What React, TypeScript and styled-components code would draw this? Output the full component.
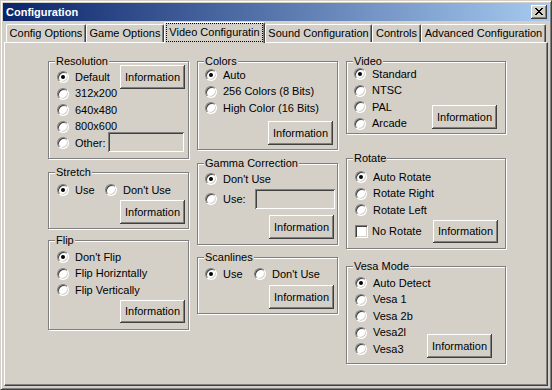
import React from "react";
import styled, { createGlobalStyle } from "styled-components";

const GlobalStyle = createGlobalStyle`
  html, body {
    margin: 0;
    padding: 0;
    background: #d4d0c8;
  }
  body {
    font-family: "Liberation Sans", Arial, sans-serif;
    font-size: 11px;
    color: #000;
  }
`;

const Window = styled.div`
  box-sizing: border-box;
  width: 552px;
  height: 390px;
  padding: 2px;
  background: #d4d0c8;
  border: 1px solid;
  border-color: #d4d0c8 #404040 #404040 #d4d0c8;
  box-shadow: inset 1px 1px #fff, inset -1px -1px #808080;
  display: flex;
  flex-direction: column;
`;

const TitleBar = styled.div`
  flex: none;
  height: 18px;
  padding: 0 2px 0 3px;
  display: flex;
  align-items: center;
  background: linear-gradient(to right, #0a246a, #a6caf0);
`;

const TitleText = styled.span`
  flex: 1;
  color: #fff;
  font-weight: bold;
  font-size: 11px;
  line-height: 13px;
`;

const CloseButton = styled.div`
  box-sizing: border-box;
  width: 16px;
  height: 14px;
  background: #d4d0c8;
  box-shadow: inset -1px -1px #404040, inset 1px 1px #fff, inset -2px -2px #808080;
  display: flex;
  align-items: center;
  justify-content: center;
  padding: 0 1px 1px 0;
`;

const Body = styled.div`
  flex: 1;
  display: flex;
  flex-direction: column;
  padding-top: 1px;
  margin: 0 1px 1px;
`;

const TabRow = styled.div`
  flex: none;
  height: 20px;
  padding-left: 2px;
  display: flex;
  align-items: flex-end;
`;

const Tab = styled.div<{ $w: number; $active?: boolean }>`
  box-sizing: border-box;
  width: ${(p) => p.$w}px;
  height: ${(p) => (p.$active ? 21 : 18)}px;
  margin-bottom: ${(p) => (p.$active ? -1 : 0)}px;
  position: relative;
  z-index: ${(p) => (p.$active ? 1 : 0)};
  background: #d4d0c8;
  border-top: 1px solid #fff;
  border-left: 1px solid #fff;
  border-right: 1px solid #404040;
  border-radius: 2px 2px 0 0;
  box-shadow: inset -1px 0 #808080;
  padding: 0 1px 1px;
  display: flex;
  align-items: center;
  justify-content: center;
  white-space: nowrap;
  line-height: 13px;
`;

const FocusRing = styled.span`
  align-self: stretch;
  flex: 1;
  border: 1px dotted #000;
  display: flex;
  align-items: center;
  justify-content: center;
`;

const Panel = styled.div`
  flex: 1;
  box-sizing: border-box;
  border: 1px solid;
  border-color: #fff #404040 #404040 #fff;
  box-shadow: inset -1px -1px #808080;
  padding: 12px 0 0 43px;
  display: grid;
  grid-template-columns: 141px 141px 160px;
  column-gap: 8px;
  align-items: start;
`;

const Column = styled.div`
  display: flex;
  flex-direction: column;
`;

const Frame = styled.fieldset<{ $h: number; $mt?: number }>`
  box-sizing: border-box;
  height: ${(p) => p.$h}px;
  margin: ${(p) => p.$mt ?? 0}px 0 0;
  padding: 0;
  min-width: 0;
  border: 1px solid #808080;
  box-shadow: inset 1px 1px #fff, 1px 1px #fff;
`;

const Caption = styled.legend`
  margin-left: 6px;
  padding: 0 1px;
  font-size: 11px;
  line-height: 13px;
  background: #d4d0c8;
`;

const Content = styled.div<{ $off: number; $pl: number; $pr: number; $row?: boolean }>`
  display: flex;
  flex-direction: ${(p) => (p.$row ? "row" : "column")};
  margin-top: ${(p) => p.$off}px;
  padding: 0 ${(p) => p.$pr}px 0 ${(p) => p.$pl}px;
`;

const List = styled.div`
  flex: 1;
  min-width: 0;
  display: flex;
  flex-direction: column;
`;

const Aside = styled.div<{ $mt: number; $h?: number }>`
  flex: none;
  display: flex;
  flex-direction: column;
  align-items: flex-end;
  justify-content: space-between;
  margin-top: ${(p) => p.$mt}px;
  height: ${(p) => (p.$h ? `${p.$h}px` : "auto")};
`;

const Row = styled.div<{ $h?: number; $mt?: number }>`
  display: flex;
  align-items: center;
  height: ${(p) => p.$h ?? 16.5}px;
  margin-top: ${(p) => p.$mt ?? 0}px;
`;

const ButtonLine = styled.div<{ $mt: number; $mr?: number }>`
  display: flex;
  justify-content: flex-end;
  margin-top: ${(p) => p.$mt}px;
  margin-right: ${(p) => p.$mr ?? 0}px;
`;

const Choice = styled.label<{ $w?: number }>`
  display: flex;
  align-items: center;
  flex: none;
  width: ${(p) => (p.$w ? `${p.$w}px` : "auto")};
  white-space: nowrap;
`;

const Dot = styled.span<{ $on?: boolean }>`
  box-sizing: border-box;
  flex: none;
  width: 12px;
  height: 12px;
  border-radius: 50%;
  border: 1px solid;
  border-color: #808080 #fff #fff #808080;
  background: #fff;
  box-shadow: inset 1px 1px #404040, inset -1px -1px #d4d0c8;
  display: flex;
  align-items: center;
  justify-content: center;

  &::after {
    content: "";
    width: 4px;
    height: 4px;
    border-radius: 50%;
    background: ${(p) => (p.$on ? "#000" : "transparent")};
  }
`;

const Box = styled.span`
  box-sizing: border-box;
  flex: none;
  width: 13px;
  height: 13px;
  border: 1px solid;
  border-color: #808080 #fff #fff #808080;
  background: #fff;
  box-shadow: inset 1px 1px #404040, inset -1px -1px #d4d0c8;
`;

const ChoiceText = styled.span<{ $gap?: number }>`
  margin-left: ${(p) => p.$gap ?? 6}px;
  line-height: 13px;
`;

const Button = styled.button<{ $h?: number; $mr?: number }>`
  box-sizing: border-box;
  flex: none;
  width: 65px;
  height: ${(p) => p.$h ?? 24}px;
  margin: 0 ${(p) => p.$mr ?? 0}px 0 0;
  padding: 0 0 1px;
  border: none;
  background: #d4d0c8;
  color: #000;
  font-family: "Liberation Sans", Arial, sans-serif;
  font-size: 11px;
  box-shadow: inset -1px -1px #404040, inset 1px 1px #fff, inset -2px -2px #808080;
`;

const Field = styled.input<{ $w: number; $mr?: number }>`
  box-sizing: border-box;
  flex: none;
  width: ${(p) => p.$w}px;
  height: 20px;
  margin: 0 ${(p) => p.$mr ?? 0}px 0 auto;
  padding: 0;
  border: none;
  background: #d4d0c8;
  box-shadow: inset 1px 1px #808080, inset -1px -1px #fff, inset 2px 2px #404040,
    inset -2px -2px #d4d0c8;
`;

const Radio = ({ label, on, w }: { label: string; on?: boolean; w?: number }) => (
  <Choice $w={w}>
    <Dot $on={on} />
    <ChoiceText>{label}</ChoiceText>
  </Choice>
);

const Group = ({
  label,
  h,
  mt,
  children,
}: {
  label: string;
  h: number;
  mt?: number;
  children: React.ReactNode;
}) => (
  <Frame $h={h} $mt={mt}>
    <Caption>{label}</Caption>
    {children}
  </Frame>
);

const CloseGlyph = () => (
  <svg width="8" height="7" viewBox="0 0 8 7" shapeRendering="crispEdges">
    <path
      fill="#000"
      d="M0 0h2v1H0zM6 0h2v1H6zM1 1h2v1H1zM5 1h2v1H5zM2 2h4v1H2zM3 3h2v1H3zM2 4h4v1H2zM1 5h2v1H1zM5 5h2v1H5zM0 6h2v1H0zM6 6h2v1H6z"
    />
  </svg>
);

const tabs = [
  { label: "Config Options", w: 80 },
  { label: "Game Options", w: 78 },
  { label: "Video Configuratin", w: 101, active: true },
  { label: "Sound Configuration", w: 107 },
  { label: "Controls", w: 49 },
  { label: "Advanced Configuration", w: 125 },
];

export default function App() {
  return (
    <>
      <GlobalStyle />
      <Window>
        <TitleBar>
          <TitleText>Configuration</TitleText>
          <CloseButton>
            <CloseGlyph />
          </CloseButton>
        </TitleBar>
        <Body>
          <TabRow>
            {tabs.map((t) => (
              <Tab key={t.label} $w={t.w} $active={t.active}>
                {t.active ? <FocusRing>{t.label}</FocusRing> : t.label}
              </Tab>
            ))}
          </TabRow>
          <Panel>
            <Column>
              <Group label="Resolution" h={104}>
                <Content $off={0.75} $pl={8} $pr={3} $row>
                  <List>
                    <Row><Radio label="Default" on /></Row>
                    <Row><Radio label="312x200" /></Row>
                    <Row><Radio label="640x480" /></Row>
                    <Row><Radio label="800x600" /></Row>
                    <Row><Radio label="Other:" /></Row>
                  </List>
                  <Aside $mt={-3.75} $h={87}>
                    <Button>Information</Button>
                    <Field $w={76} $mr={1} disabled />
                  </Aside>
                </Content>
              </Group>
              <Group label="Stretch" h={63} mt={7}>
                <Content $off={2.75} $pl={8} $pr={3}>
                  <Row>
                    <Radio label="Use" on w={48} />
                    <Radio label="Don't Use" />
                  </Row>
                  <ButtonLine $mt={1.75}>
                    <Button>Information</Button>
                  </ButtonLine>
                </Content>
              </Group>
              <Group label="Flip" h={96} mt={5}>
                <Content $off={1.75} $pl={8} $pr={3}>
                  <Row><Radio label="Don't Flip" on /></Row>
                  <Row><Radio label="Flip Horizntally" /></Row>
                  <Row><Radio label="Flip Vertically" /></Row>
                  <ButtonLine $mt={1.75}>
                    <Button $h={23}>Information</Button>
                  </ButtonLine>
                </Content>
              </Group>
            </Column>

            <Column>
              <Group label="Colors" h={95}>
                <Content $off={-1.25} $pl={7} $pr={4}>
                  <Row><Radio label="Auto" on /></Row>
                  <Row><Radio label="256 Colors (8 Bits)" /></Row>
                  <Row><Radio label="High Color (16 Bits)" /></Row>
                  <ButtonLine $mt={4.75}>
                    <Button>Information</Button>
                  </ButtonLine>
                </Content>
              </Group>
              <Group label="Gamma Correction" h={88} mt={7}>
                <Content $off={0.75} $pl={7} $pr={2}>
                  <Row><Radio label="Don't Use" on /></Row>
                  <Row $h={20} $mt={1.75}>
                    <Radio label="Use:" />
                    <Field $w={80} disabled />
                  </Row>
                  <ButtonLine $mt={6} $mr={1}>
                    <Button>Information</Button>
                  </ButtonLine>
                </Content>
              </Group>
              <Group label="Scanlines" h={63} mt={6}>
                <Content $off={1.75} $pl={7} $pr={3}>
                  <Row>
                    <Radio label="Use" on w={49} />
                    <Radio label="Don't Use" />
                  </Row>
                  <ButtonLine $mt={2.75}>
                    <Button>Information</Button>
                  </ButtonLine>
                </Content>
              </Group>
            </Column>

            <Column>
              <Group label="Video" h={79}>
                <Content $off={-2.25} $pl={7} $pr={8} $row>
                  <List>
                    <Row><Radio label="Standard" on /></Row>
                    <Row><Radio label="NTSC" /></Row>
                    <Row><Radio label="PAL" /></Row>
                    <Row><Radio label="Arcade" /></Row>
                  </List>
                  <Aside $mt={39.25}>
                    <Button>Information</Button>
                  </Aside>
                </Content>
              </Group>
              <Group label="Rotate" h={97} mt={18}>
                <Content $off={3.75} $pl={8} $pr={7}>
                  <Row><Radio label="Auto Rotate" on /></Row>
                  <Row><Radio label="Rotate Right" /></Row>
                  <Row><Radio label="Rotate Left" /></Row>
                  <Row $h={23} $mt={1.75}>
                    <Choice>
                      <Box />
                      <ChoiceText $gap={4}>No Rotate</ChoiceText>
                    </Choice>
                    <ButtonLine $mt={0} style={{ flex: 1 }}>
                      <Button $h={23}>Information</Button>
                    </ButtonLine>
                  </Row>
                </Content>
              </Group>
              <Group label="Vesa Mode" h={104} mt={11}>
                <Content $off={1.75} $pl={8} $pr={13} $row>
                  <List>
                    <Row><Radio label="Auto Detect" on /></Row>
                    <Row><Radio label="Vesa 1" /></Row>
                    <Row><Radio label="Vesa 2b" /></Row>
                    <Row><Radio label="Vesa2l" /></Row>
                    <Row><Radio label="Vesa3" /></Row>
                  </List>
                  <Aside $mt={59.25}>
                    <Button>Information</Button>
                  </Aside>
                </Content>
              </Group>
            </Column>
          </Panel>
        </Body>
      </Window>
    </>
  );
}
